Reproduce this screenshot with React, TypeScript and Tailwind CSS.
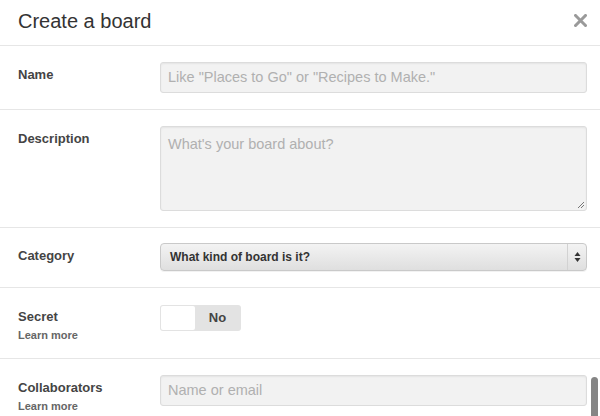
import { ReactNode } from "react";

const font = { fontFamily: '"Liberation Sans", Arial, sans-serif' };

function Row({ label, learn, children, className = "" }: { label: string; learn?: boolean; children: ReactNode; className?: string }) {
  return (
    <div className={`flex border-b border-[#e6e6e6] pl-[18px] pr-[13px] py-4 ${className}`}>
      <div className="w-[142px] shrink-0 pt-[1px]">
        <div className="text-[13px] font-bold leading-[24px] text-[#444]">{label}</div>
        {learn && <div className="text-[11px] font-bold leading-[12px] text-[#666]">Learn more</div>}
      </div>
      <div className="flex-1">{children}</div>
    </div>
  );
}

function TextBox({ placeholder }: { placeholder: string }) {
  return (
    <div className="flex h-[31px] items-center rounded-[3px] border border-[#dcdcdc] bg-[#f2f2f2] px-[7px] text-[14.5px] text-[#b0b0b0] shadow-[inset_0_1px_2px_rgba(0,0,0,0.06)]">
      {placeholder}
    </div>
  );
}

export default function App() {
  return (
    <div className="relative h-[416px] w-[600px] overflow-hidden bg-white" style={font}>
      <div className="flex h-[46px] items-center justify-between border-b border-[#e6e6e6] pl-[18px] pr-[13px] pb-[4px]">
        <h1 className="text-[20px] text-[#333]">Create a board</h1>
        <svg width="13" height="13" viewBox="0 0 13 13">
          <path d="M1.5 1.5 L11.5 11.5 M11.5 1.5 L1.5 11.5" stroke="#9a9a9a" strokeWidth="3" strokeLinecap="square" />
        </svg>
      </div>

      <Row label="Name">
        <TextBox placeholder={'Like "Places to Go" or "Recipes to Make."'} />
      </Row>

      <Row label="Description">
        <div className="relative h-[85px] rounded-[3px] border border-[#dcdcdc] bg-[#f2f2f2] px-[7px] pt-[7px] text-[14.5px] text-[#b0b0b0] shadow-[inset_0_1px_2px_rgba(0,0,0,0.06)]">
          What's your board about?
          <svg width="8" height="8" viewBox="0 0 8 8" className="absolute bottom-[1px] right-[1px]">
            <path d="M7 1 L1 7 M7 4 L4 7" stroke="#777" strokeWidth="1" />
          </svg>
        </div>
      </Row>

      <Row label="Category" className="pt-[15px]">
        <div className="flex h-[28px] items-center rounded-[4px] border border-[#c9c9c9] bg-gradient-to-b from-[#f3f3f3] to-[#dfdfdf] shadow-[0_1px_0_rgba(0,0,0,0.05)]">
          <span className="flex-1 pl-[9px] text-[12px] font-bold text-[#333]">What kind of board is it?</span>
          <div className="flex h-full w-[19px] items-center justify-center border-l border-[#d2d2d2]">
            <svg width="7" height="12" viewBox="0 0 7 12">
              <path d="M3.5 1 L6.5 5 L0.5 5 Z M3.5 11 L6.5 7 L0.5 7 Z" fill="#333" />
            </svg>
          </div>
        </div>
      </Row>

      <Row label="Secret" learn className="pb-[17px]">
        <div className="mt-[1px] flex h-[26px] w-[81px] items-center rounded-[3px] bg-[#e3e3e3] p-[1px]">
          <div className="h-full w-[34px] rounded-[2px] bg-white" />
          <span className="flex-1 text-center text-[13px] font-bold text-[#444]">No</span>
        </div>
      </Row>

      <Row label="Collaborators" learn>
        <TextBox placeholder="Name or email" />
      </Row>

      <div className="absolute left-[591px] top-[377px] h-[60px] w-[7px] rounded-full bg-[#858585]" />
    </div>
  );
}
